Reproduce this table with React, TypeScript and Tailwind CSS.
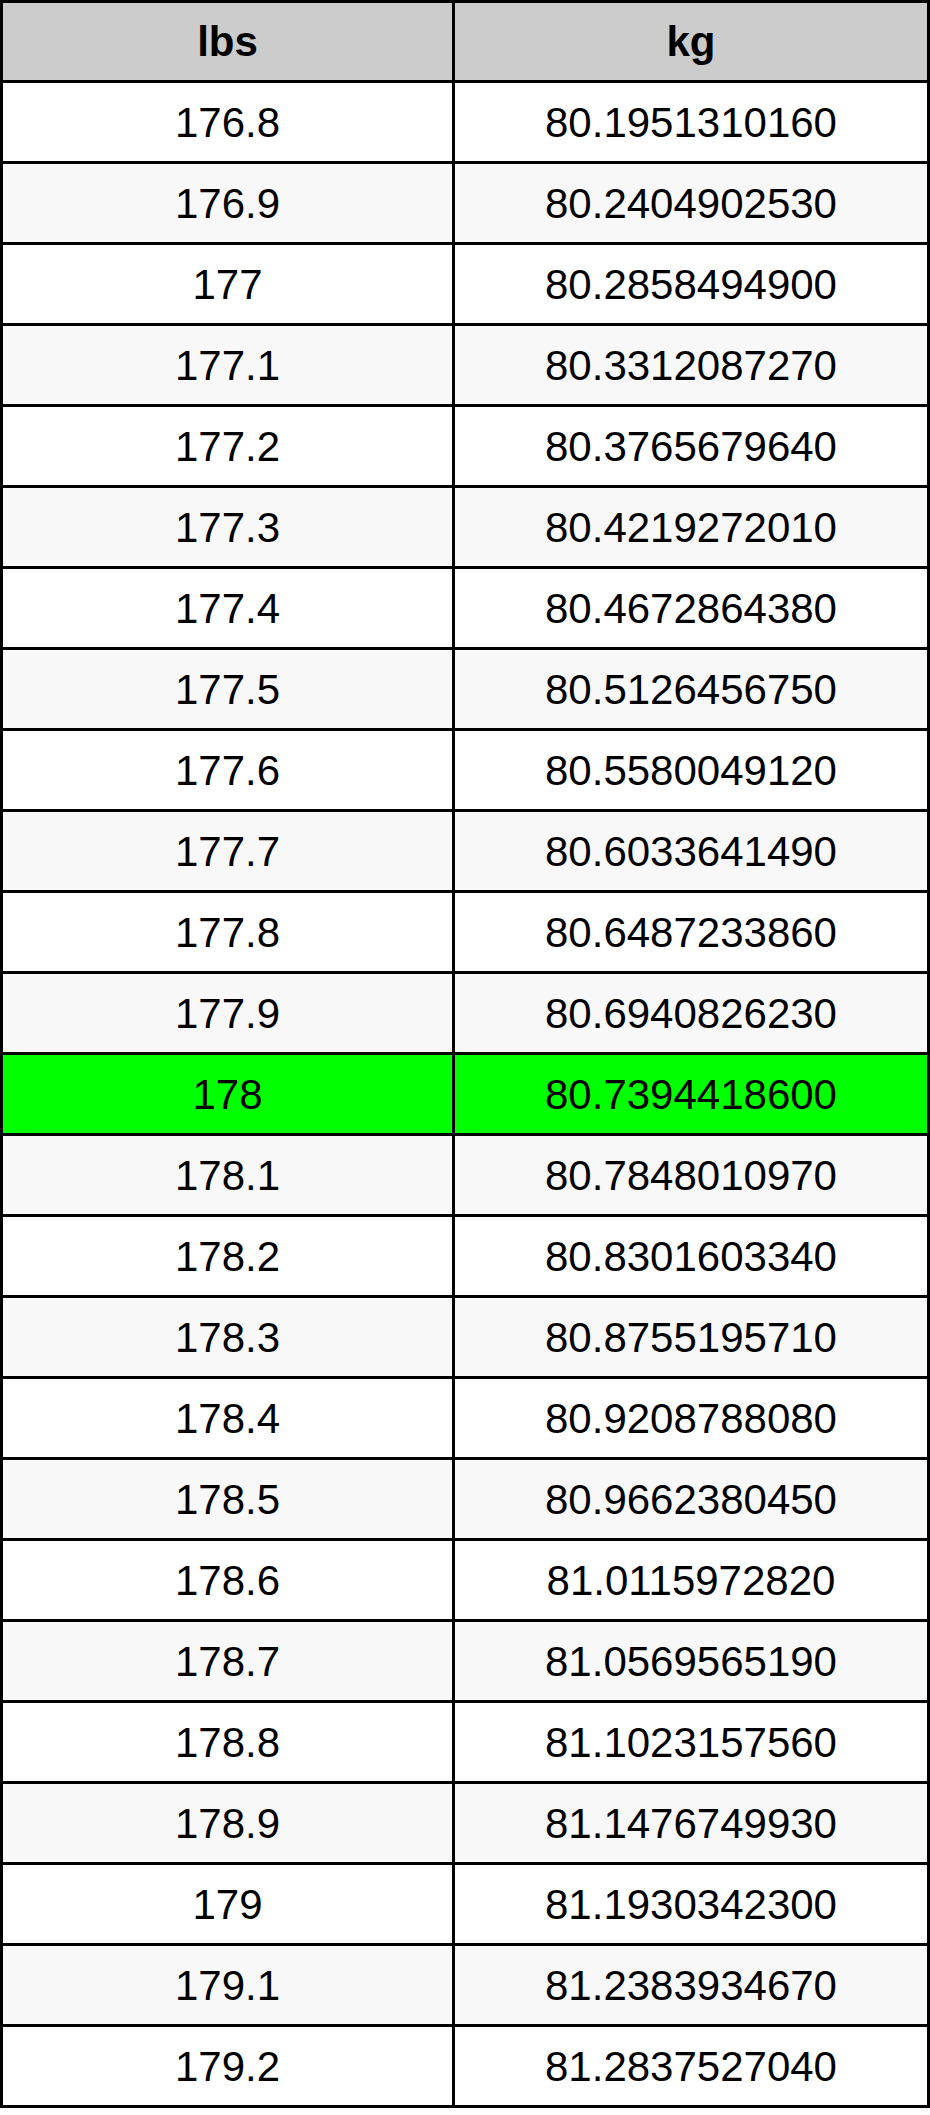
const rows: [string, string][] = [
  ['176.8', '80.1951310160'],
  ['176.9', '80.2404902530'],
  ['177', '80.2858494900'],
  ['177.1', '80.3312087270'],
  ['177.2', '80.3765679640'],
  ['177.3', '80.4219272010'],
  ['177.4', '80.4672864380'],
  ['177.5', '80.5126456750'],
  ['177.6', '80.5580049120'],
  ['177.7', '80.6033641490'],
  ['177.8', '80.6487233860'],
  ['177.9', '80.6940826230'],
  ['178', '80.7394418600'],
  ['178.1', '80.7848010970'],
  ['178.2', '80.8301603340'],
  ['178.3', '80.8755195710'],
  ['178.4', '80.9208788080'],
  ['178.5', '80.9662380450'],
  ['178.6', '81.0115972820'],
  ['178.7', '81.0569565190'],
  ['178.8', '81.1023157560'],
  ['178.9', '81.1476749930'],
  ['179', '81.1930342300'],
  ['179.1', '81.2383934670'],
  ['179.2', '81.2837527040'],
];

function App() {
  return (
    <div className="w-[930px] min-h-[2115px] bg-white font-['Liberation_Sans',Arial,sans-serif] text-black">
      <div className="grid grid-cols-[449px_472px] gap-[3px] bg-black p-[3px]">
        <div className="h-[77px] flex items-center justify-center bg-[#cccccc] text-[42px] font-bold">lbs</div>
        <div className="h-[77px] flex items-center justify-center bg-[#cccccc] text-[42px] font-bold">kg</div>
        {rows.map(([lbs, kg], i) => {
          const bg = lbs === '178' ? 'bg-[#00ff00]' : i % 2 === 1 ? 'bg-[#f8f8f8]' : 'bg-white';
          return [
            <div key={lbs + 'a'} className={`h-[78px] flex items-center justify-center text-[42px] ${bg}`}>
              {lbs}
            </div>,
            <div key={lbs + 'b'} className={`h-[78px] flex items-center justify-center text-[42px] ${bg}`}>
              {kg}
            </div>,
          ];
        })}
      </div>
    </div>
  );
}

export default App;
